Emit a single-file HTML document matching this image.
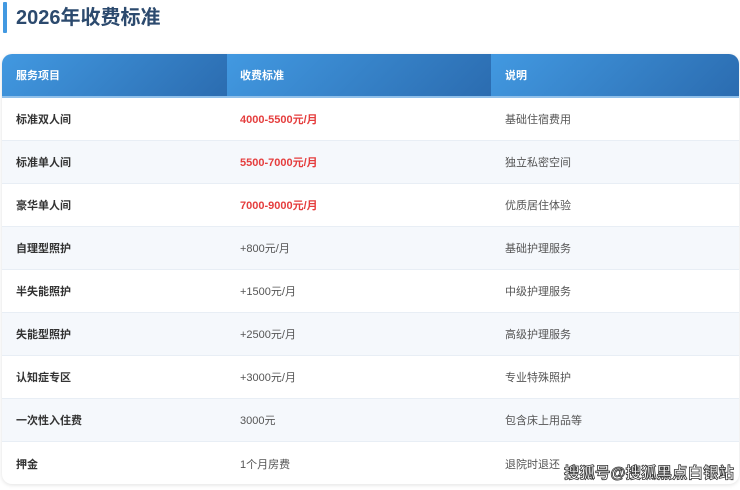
<!DOCTYPE html>
<html><head><meta charset="utf-8"><style>
*{margin:0;padding:0;box-sizing:border-box}
body{width:740px;height:490px;background:#fff;font-family:"Liberation Sans","Noto Sans CJK SC",sans-serif;position:relative;overflow:hidden}
.bar{position:absolute;left:3px;top:2px;width:4px;height:31px;background:#4299e1;border-radius:1px}
h1{position:absolute;left:16px;top:4px;font-size:20px;font-weight:bold;color:#2c4a6e;line-height:28px}
.tbl{position:absolute;left:2px;top:54px;width:737px;height:430px;border-radius:10px;overflow:hidden;box-shadow:0 1px 4px rgba(0,0,0,.12)}
.row{display:flex;height:43px;align-items:center;font-size:11px;color:#555;border-bottom:1px solid #e8eef5}
.row div{height:100%;display:flex;align-items:center}
.c1{width:225px;padding-left:14px;font-weight:bold;color:#333}
.c2{width:264px;padding-left:13px}
.c3{flex:1;padding-left:14px}
.hd{height:44px;border-bottom:2px solid #90c0ea}
.hd div{background:linear-gradient(135deg,#4299e1,#2b6cb0);color:#fff;font-weight:bold}
.row:nth-child(odd):not(.hd){background:#f5f8fc}
.red{color:#e53e3e;font-weight:bold}
.wm{position:absolute;right:6px;bottom:7px;font-size:15.5px;font-weight:bold;color:#fff;-webkit-text-stroke:0.8px #333;letter-spacing:0}
</style></head><body>
<div class="bar"></div><h1>2026年收费标准</h1>
<div class="tbl">
<div class="row hd"><div class="c1">服务项目</div><div class="c2">收费标准</div><div class="c3">说明</div></div>
<div class="row"><div class="c1">标准双人间</div><div class="c2 red">4000-5500元/月</div><div class="c3">基础住宿费用</div></div>
<div class="row"><div class="c1">标准单人间</div><div class="c2 red">5500-7000元/月</div><div class="c3">独立私密空间</div></div>
<div class="row"><div class="c1">豪华单人间</div><div class="c2 red">7000-9000元/月</div><div class="c3">优质居住体验</div></div>
<div class="row"><div class="c1">自理型照护</div><div class="c2">+800元/月</div><div class="c3">基础护理服务</div></div>
<div class="row"><div class="c1">半失能照护</div><div class="c2">+1500元/月</div><div class="c3">中级护理服务</div></div>
<div class="row"><div class="c1">失能型照护</div><div class="c2">+2500元/月</div><div class="c3">高级护理服务</div></div>
<div class="row"><div class="c1">认知症专区</div><div class="c2">+3000元/月</div><div class="c3">专业特殊照护</div></div>
<div class="row"><div class="c1">一次性入住费</div><div class="c2">3000元</div><div class="c3">包含床上用品等</div></div>
<div class="row" style="border-bottom:none"><div class="c1">押金</div><div class="c2">1个月房费</div><div class="c3">退院时退还</div></div>
</div>
<div class="wm">搜狐号@搜狐黑点白银站</div>
</body></html>
